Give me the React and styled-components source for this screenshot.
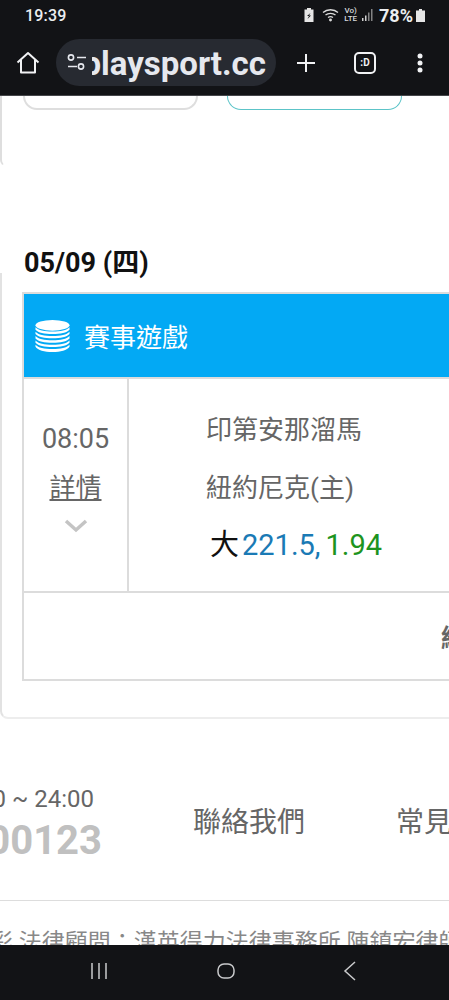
import React from 'react';
import styled, {createGlobalStyle} from 'styled-components';

const GlobalStyle = createGlobalStyle`
  html, body {
    margin: 0;
    padding: 0;
    background: #fff;
  }
  * {
    box-sizing: border-box;
  }
`;

const FONT = `Roboto, "Noto Sans CJK TC", sans-serif`;

const Page = styled.div`
  width: 449px;
  height: 1000px;
  display: flex;
  flex-direction: column;
  overflow: hidden;
  font-family: ${FONT};
  background: #fff;
`;

const BrowserTop = styled.header`
  height: 96px;
  flex: none;
  background: #121316;
  border-bottom: 1px solid #45464a;
`;

const StatusBar = styled.div`
  height: 30px;
  padding: 0 24px 0 25px;
  display: flex;
  align-items: center;
  justify-content: space-between;
  color: #eceef0;
`;

const Clock = styled.span`
  font-size: 16px;
  font-weight: 500;
  letter-spacing: 0.2px;
`;

const StatusIcons = styled.div`
  display: flex;
  align-items: center;
  gap: 5px;
`;

const ChargeIcon = styled.svg`
  margin-right: 3px;
`;

const VoLte = styled.span`
  font-size: 8px;
  line-height: 8px;
  font-weight: 500;
  text-align: center;
  color: #d8dadc;
`;

const Percent = styled.span`
  font-size: 18px;
  font-weight: 700;
  margin-left: 1px;
  margin-right: -2px;
`;

const Toolbar = styled.div`
  height: 47px;
  margin-top: 9px;
  padding: 0 16px;
  display: flex;
  align-items: center;
`;

const IconSlot = styled.div`
  display: flex;
  align-items: center;
  justify-content: center;
  color: #f1f2f4;
  flex: none;
`;

const UrlPill = styled.div`
  width: 220px;
  height: 47px;
  margin-left: 16px;
  margin-right: 20px;
  padding-left: 10px;
  border-radius: 24px;
  background: #272a31;
  display: flex;
  align-items: center;
  overflow: hidden;
  flex: none;
`;

const UrlClip = styled.div`
  width: 174px;
  margin-left: 4px;
  padding-top: 2px;
  overflow: hidden;
  direction: rtl;
  white-space: nowrap;
  color: #e6e8ee;
  font-size: 33px;
  font-weight: 700;
`;

const TabCount = styled.div`
  width: 22px;
  height: 22px;
  border: 2px solid #f1f2f4;
  border-radius: 5px;
  margin-left: 38px;
  margin-right: 41px;
  font-size: 10px;
  font-weight: 700;
  color: #f1f2f4;
  display: flex;
  align-items: center;
  justify-content: center;
`;

const Content = styled.main`
  flex: 1;
  min-height: 0;
  overflow: hidden;
`;

const PrevCard = styled.section`
  height: 70px;
  padding: 0 0 0 23px;
  border-left: 2px solid #dedede;
  border-bottom: 1px solid #fff;
  border-bottom-left-radius: 6px;
  margin-bottom: 82px;
`;

const Buttons = styled.div`
  display: flex;
  gap: 29px;
  margin-left: -2px;
`;

const CutButton = styled.div`
  width: 175px;
  height: 14px;
  border: ${p => p.$weight}px solid ${p => p.$color};
  border-top: none;
  border-radius: 0 0 14px 14px;
`;

const DayTitle = styled.h2`
  margin: 0 0 13px 24px;
  height: 30px;
  font-size: 27px;
  line-height: 30px;
  font-weight: 700;
  color: #111;
`;

const Card = styled.section`
  width: 980px;
  padding: 19px 0 36px 20px;
  margin-top: -18px;
  border-left: 2px solid #e2e2e2;
  border-bottom: 2px solid #ededed;
  border-bottom-left-radius: 8px;
`;

const GameTable = styled.div`
  width: 938px;
  border: 2px solid #dcdcdc;
`;

const BlueHeader = styled.div`
  height: 83px;
  background: #03a9f4;
  color: #fff;
  display: flex;
  align-items: center;
  padding-left: 11px;
  gap: 14px;
  font-size: 26px;
`;

const MatchRow = styled.div`
  height: 216px;
  display: flex;
  border-top: 2px solid #dcdcdc;
  border-bottom: 2px solid #dcdcdc;
`;

const TimeCell = styled.div`
  width: 105px;
  border-right: 2px solid #dcdcdc;
  flex: none;
  display: flex;
  flex-direction: column;
  align-items: center;
  padding-top: 43px;
`;

const Time = styled.div`
  font-size: 27px;
  line-height: 34px;
  color: #666;
`;

const Detail = styled.a`
  margin-top: 17px;
  font-size: 26px;
  line-height: 30px;
  color: #666;
  text-decoration: underline;
  text-underline-offset: 2px;
`;

const Chevron = styled.svg`
  margin-top: 15px;
  color: #c4c4c4;
`;

const TeamCell = styled.div`
  padding: 31px 0 0 77px;
`;

const Team = styled.div`
  height: 58px;
  font-size: 26px;
  line-height: 40px;
  color: #666;
`;

const Odds = styled.div`
  padding-left: 4px;
  margin-top: -1px;
  font-size: 29px;
  line-height: 40px;
  display: flex;
  align-items: baseline;
`;

const OddsText = styled.span`
  color: ${p => p.$color};
  margin-left: ${p => p.$gap || 0}px;
`;

const SummaryRow = styled.div`
  height: 86px;
  display: flex;
  align-items: center;
  justify-content: center;
  font-size: 25px;
  font-weight: 700;
  color: #666;
`;

const FooterLinks = styled.div`
  height: 117px;
  margin-top: 65px;
  border-bottom: 1px solid #ddd;
  display: flex;
  white-space: nowrap;
`;

const ServiceBlock = styled.div`
  width: 197px;
  margin-left: -95px;
  margin-right: 91px;
  flex: none;
  text-align: right;
`;

const Hours = styled.div`
  font-size: 24px;
  line-height: 30px;
  color: #666;
  width: 189px;
`;

const Phone = styled.div`
  margin-top: 3px;
  font-size: 40px;
  line-height: 48px;
  font-weight: 700;
  color: #c0c0c0;
`;

const FooterLink = styled.div`
  font-size: 28px;
  line-height: 40px;
  margin-top: 19px;
  color: #666;
  margin-right: 91px;
`;

const LegalLine = styled.div`
  margin-top: 27px;
  margin-left: -56px;
  font-size: 23px;
  line-height: 30px;
  color: #888;
  white-space: nowrap;
`;

const NavBar = styled.nav`
  height: 55px;
  flex: none;
  background: #121316;
  display: flex;
  align-items: center;
  color: #c9cacc;
  padding: 0 92px 4px 90px;
  justify-content: space-between;
`;

function HomeIcon() {
    return (
        <svg width="24" height="24" viewBox="0 0 24 24" fill="none" stroke="currentColor" strokeWidth="2" strokeLinejoin="round">
            <path d="M1.5 11.5 12 2l10.5 9.5M5 9v12.5h14V9" />
        </svg>
    );
}

function TuneIcon() {
    return (
        <svg width="22" height="20" viewBox="0 0 22 20" fill="none" stroke="#e6e8ee" strokeWidth="1.6">
            <circle cx="5" cy="4.5" r="2.6" />
            <path d="M11 4.5h9M2 13.5h9" />
            <circle cx="15" cy="13.5" r="2.6" />
        </svg>
    );
}

function CoinsIcon() {
    return (
        <svg width="35" height="34" viewBox="0 0 36 34" fill="#fff">
            <ellipse cx="18" cy="6" rx="17.5" ry="5.5" />
            <path d="M.5 8c3 3 9 4.400 17.500 4.400S32.500 11 35.500 8v2.500c-3 3-9 4.400-17.500 4.400S3.500 13.500.5 10.500z" />
            <path d="M.5 12.500c3 3 9 4.400 17.500 4.400s14.500-1.400 17.500-4.400V15c-3 3-9 4.400-17.500 4.400S3.500 18 .5 15z" />
            <path d="M.5 17c3 3 9 4.400 17.500 4.400S32.500 20 35.500 17v2.500c-3 3-9 4.400-17.500 4.400S3.500 22.500.5 19.500z" />
            <path d="M.5 21.500c3 3 9 4.400 17.500 4.400s14.500-1.400 17.500-4.400V24c-3 3-9 4.400-17.500 4.400S3.500 27 .5 24z" />
            <path d="M.5 26c3 3 9 4.400 17.500 4.400S32.500 29 35.500 26v2c-2.500 3.500-9 5.500-17.500 5.500S3 31.500.5 28z" />
        </svg>
    );
}

export default function App() {
    return (
        <Page>
            <GlobalStyle />
            <BrowserTop>
                <StatusBar>
                    <Clock>19:39</Clock>
                    <StatusIcons>
                        <ChargeIcon width="10" height="14" viewBox="0 0 10 14" fill="#e6e6e6">
                            <path d="M3 0h4v1.500h2.500V14H.5V1.500H3zM6.500 5 3 8h2l-1.500 3L7 7.500H5z" fillRule="evenodd" />
                        </ChargeIcon>
                        <svg width="17" height="14" viewBox="0 0 17 14" fill="none" stroke="#dcdcdc" strokeWidth="1.300">
                            <path d="M1 4.500C5 .8 12 .8 16 4.500M3.500 7c2.700-2.300 7.300-2.300 10 0M6 9.500c1.500-1 3.500-1 5 0" />
                            <circle cx="8.500" cy="12" r=".8" fill="#dcdcdc" />
                        </svg>
                        <VoLte>Vo)<br />LTE</VoLte>
                        <svg width="11" height="12" viewBox="0 0 11 12" fill="#cfcfcf">
                            <rect x="0" y="9" width="1.500" height="3" />
                            <rect x="3" y="6.500" width="1.500" height="5.500" />
                            <rect x="6" y="3.500" width="1.500" height="8.500" opacity=".6" />
                            <rect x="9" y="0" width="1.500" height="12" opacity=".6" />
                        </svg>
                        <Percent>78%</Percent>
                        <svg width="9" height="13" viewBox="0 0 9 13" fill="#e6e6e6">
                            <path d="M3 0h3v1.500h3V13H0V1.500h3z" />
                        </svg>
                    </StatusIcons>
                </StatusBar>
                <Toolbar>
                    <IconSlot><HomeIcon /></IconSlot>
                    <UrlPill>
                        <TuneIcon />
                        <UrlClip><bdi>playsport.cc</bdi></UrlClip>
                    </UrlPill>
                    <IconSlot>
                        <svg width="20" height="20" viewBox="0 0 20 20" stroke="currentColor" strokeWidth="2">
                            <path d="M10 1v18M1 10h18" />
                        </svg>
                    </IconSlot>
                    <TabCount>:D</TabCount>
                    <IconSlot>
                        <svg width="6" height="20" viewBox="0 0 6 20" fill="currentColor">
                            <circle cx="3" cy="3" r="2.500" />
                            <circle cx="3" cy="10" r="2.500" />
                            <circle cx="3" cy="17" r="2.500" />
                        </svg>
                    </IconSlot>
                </Toolbar>
            </BrowserTop>
            <Content>
                <PrevCard>
                    <Buttons>
                        <CutButton $color="#dedede" $weight={2} />
                        <CutButton $color="#5cc4c8" $weight={1} />
                    </Buttons>
                </PrevCard>
                <DayTitle>05/09 (四)</DayTitle>
                <Card>
                    <GameTable>
                        <BlueHeader>
                            <CoinsIcon />
                            <span>賽事遊戲</span>
                        </BlueHeader>
                        <MatchRow>
                            <TimeCell>
                                <Time>08:05</Time>
                                <Detail>詳情</Detail>
                                <Chevron width="24" height="16" viewBox="0 0 24 16" fill="none" stroke="currentColor" strokeWidth="3.500">
                                    <path d="M2 3l10 9 10-9" />
                                </Chevron>
                            </TimeCell>
                            <TeamCell>
                                <Team>印第安那溜馬</Team>
                                <Team>紐約尼克(主)</Team>
                                <Odds>
                                    <OddsText $color="#111">大</OddsText>
                                    <OddsText $color="#1a7ab5" $gap={3}>221.5,</OddsText>
                                    <OddsText $color="#1d9420" $gap={5}>1.94</OddsText>
                                </Odds>
                            </TeamCell>
                        </MatchRow>
                        <SummaryRow>紐約尼克</SummaryRow>
                    </GameTable>
                </Card>
                <FooterLinks>
                    <ServiceBlock>
                        <Hours>09:00 ~ 24:00</Hours>
                        <Phone>0800123</Phone>
                    </ServiceBlock>
                    <FooterLink>聯絡我們</FooterLink>
                    <FooterLink>常見問題</FooterLink>
                </FooterLinks>
                <LegalLine>玩運彩 法律顧問：漢英得力法律事務所 陳鎮宏律師</LegalLine>
            </Content>
            <NavBar>
                <svg width="18" height="18" viewBox="0 0 18 18" stroke="currentColor" strokeWidth="1.500">
                    <path d="M2 1v16M9 1v16M16 1v16" />
                </svg>
                <svg width="18" height="18" viewBox="0 0 18 18" fill="none" stroke="currentColor" strokeWidth="1.500">
                    <rect x="1" y="2" width="16" height="14" rx="6" />
                </svg>
                <svg width="14" height="20" viewBox="0 0 14 20" fill="none" stroke="currentColor" strokeWidth="1.500">
                    <path d="M12 1 2 10l10 9" />
                </svg>
            </NavBar>
        </Page>
    );
}
